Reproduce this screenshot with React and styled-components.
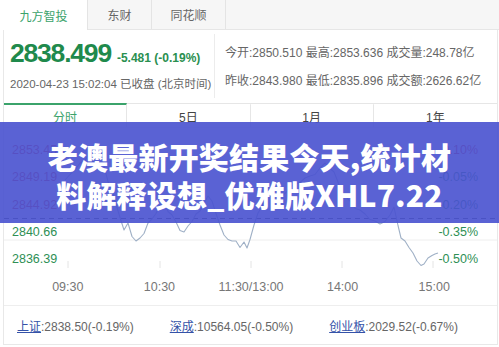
import styled, { createGlobalStyle } from 'styled-components';

const GlobalStyle = createGlobalStyle`
  html, body {
    margin: 0;
    padding: 0;
    background: #fff;
  }
  body {
    width: 499px;
    height: 347px;
    overflow: hidden;
    font-family: "Liberation Sans", "Noto Sans CJK SC", sans-serif;
    color: #555;
  }
`

const Page = styled.div`
  position: relative;
  width: 499px;
  height: 347px;
`

const TabBar = styled.div`
  display: flex;
  height: 30px;
  background: #f6f6f6;
  border-bottom: 1px solid #e6e6e6;
  box-sizing: border-box;
`

const Tab = styled.div`
  width: ${p => p.w}px;
  display: flex;
  align-items: center;
  justify-content: center;
  font-size: 12px;
  color: ${p => (p.active ? '#3ba36b' : '#666')};
  background: ${p => (p.active ? '#fff' : '#f6f6f6')};
  border-right: 1px solid #e4e4e4;
  margin-bottom: ${p => (p.active ? '-1px' : '0')};
`

const Panel = styled.div`
  margin: 0 1px 0 3px;
  border-left: 1px solid #e8e8e8;
  border-right: 1px solid #e8e8e8;
  border-bottom: 1px solid #e8e8e8;
`

const Quote = styled.div`
  display: flex;
  height: 73px;
`

const QuoteLeft = styled.div`
  width: 204px;
  padding: 4px 0 0 6px;
  border-right: 1px solid #ececec;
  margin: 4px 0 5px;
`

const PriceRow = styled.div`
  display: flex;
  align-items: baseline;
  gap: 6px;
  height: 32px;
`

const Price = styled.span`
  font-size: 26.5px;
  font-weight: 700;
  letter-spacing: -1.2px;
  color: #1f8a4c;
`

const Change = styled.span`
  font-size: 12px;
  font-weight: 700;
  color: #2a8f4f;
`

const DateLine = styled.div`
  margin-top: 5px;
  font-size: 11.5px;
  color: #666;
  white-space: nowrap;
`

const Stats = styled.div`
  display: flex;
  flex-direction: column;
  justify-content: center;
  gap: 11px;
  padding-left: 10px;
  padding-bottom: 3px;
  font-size: 12px;
  color: #666;
  white-space: nowrap;
`

const PeriodRow = styled.div`
  display: grid;
  grid-template-columns: repeat(4, 1fr);
  height: 23px;
  border-top: 1px solid #e6e6e6;
  border-bottom: 1px solid #eee;
`

const Period = styled.div`
  display: flex;
  align-items: center;
  justify-content: center;
  font-size: 12px;
  color: ${p => (p.active ? '#3ba36b' : '#444')};
  border-right: 1px solid #e6e6e6;
  border-top: 2px solid ${p => (p.active ? '#3ba36b' : 'transparent')};
  margin-top: -1px;
  &:last-child {
    border-right: none;
  }
`

const Chart = styled.div`
  position: relative;
  height: 140px;
  display: flex;
  justify-content: space-between;
  padding: 0 19px 0 8px;
`

const ChartSvg = styled.svg`
  position: absolute;
  left: 0;
  top: 0;
  width: 100%;
  height: 100%;
`

const AxisCol = styled.div`
  position: relative;
  display: flex;
  flex-direction: column;
  justify-content: space-between;
  align-items: ${p => (p.right ? 'flex-end' : 'flex-start')};
  padding: 15px 0 1px;
`

const AxisLabel = styled.span`
  font-size: 12.5px;
  line-height: 15px;
  color: ${p => (p.up ? '#d83a3a' : '#2e8f55')};
`

const XAxis = styled.div`
  display: grid;
  grid-template-columns: repeat(5, 1fr);
  height: 37px;
  padding: 0 17px 0 18px;
  border-bottom: 1px solid #eee;
  align-items: center;
`

const XLabel = styled.span`
  text-align: center;
  font-size: 12.5px;
  color: #777;
`

const Footer = styled.div`
  display: flex;
  align-items: center;
  gap: 36px;
  height: 38px;
  padding-left: 13px;
  font-size: 12px;
  color: #666;
  white-space: nowrap;
`

const IndexLink = styled.a`
  color: #3452a8;
  text-decoration: underline;
`

const Banner = styled.div`
  position: absolute;
  left: 0;
  right: 0;
  top: 122px;
  height: 101px;
  box-sizing: border-box;
  padding-top: 15px;
  background: rgba(74, 82, 208, 0.91);
  color: #fff;
  text-align: center;
  font-family: "Noto Sans CJK SC", "Liberation Sans", sans-serif;
  font-weight: 900;
  font-size: 30px;
  line-height: 38px;
  letter-spacing: 0.2px;
`

const pts = [
  [65, 178], [70, 171], [75, 169], [80, 161], [85, 157], [90, 151], [93, 160], [96, 152], [100, 148],
  [104, 164], [108, 178], [112, 190], [116, 202], [120, 214], [124, 229], [128, 221], [132, 233],
  [136, 240], [140, 236], [144, 230], [148, 222], [152, 217], [156, 210], [160, 204], [164, 199],
  [168, 208], [172, 214], [176, 220], [180, 227], [184, 231], [188, 224], [192, 218], [196, 213],
  [200, 209], [204, 200], [208, 195], [212, 199], [216, 210], [220, 224], [224, 233], [228, 236],
  [232, 240], [236, 239], [240, 244], [244, 241], [247, 246], [250, 236], [254, 224], [258, 211],
  [262, 203], [266, 196], [270, 191], [274, 186], [278, 190], [282, 194], [286, 189], [290, 186],
  [295, 182], [300, 179], [305, 177], [310, 174], [315, 171], [320, 167], [325, 161], [330, 165],
  [334, 171], [338, 180], [342, 190], [346, 196], [350, 199], [355, 205], [360, 209], [365, 212],
  [370, 216], [375, 220], [380, 222], [385, 218], [390, 214], [394, 205], [398, 222], [401, 237],
  [405, 239], [409, 244], [413, 252], [417, 259], [421, 262], [424, 263], [428, 256], [432, 252],
  [435, 253], [438, 251]
]

const line = pts.map(([x, y], i) => `${i ? 'L' : 'M'}${x} ${y + (i % 3 === 1 ? 1.5 : i % 3 === 2 ? -1 : 0)}`).join(' ')

const grid = [156, 183, 211, 238]
const ticks = [68, 160, 251, 342, 433]

const App = () => {
  return (
    <Page>
      <GlobalStyle />
      <TabBar>
        <Tab w={87} active>九方智投</Tab>
        <Tab w={63}>东财</Tab>
        <Tab w={73}>同花顺</Tab>
      </TabBar>
      <Panel>
        <Quote>
          <QuoteLeft>
            <PriceRow>
              <Price>2838.499</Price>
              <Change>-5.481 (-0.19%)</Change>
            </PriceRow>
            <DateLine>2020-04-23 15:02:04 已收盘 (北京时间)</DateLine>
          </QuoteLeft>
          <Stats>
            <span>今开:2850.510 最高:2853.636 成交量:248.78亿</span>
            <span>昨收:2843.980 最低:2835.896 成交额:2626.62亿</span>
          </Stats>
        </Quote>
        <PeriodRow>
          <Period active>分时</Period>
          <Period>5日</Period>
          <Period>1月</Period>
          <Period>1年</Period>
        </PeriodRow>
        <Chart>
          <ChartSvg viewBox="4 126 493 140" preserveAspectRatio="none">
            {grid.map(y => (
              <line key={y} x1="4" x2="497" y1={y} y2={y} stroke="#eeeeee" strokeWidth="1" />
            ))}
            {ticks.map(x => (
              <line key={x} x1={x} x2={x} y1="259" y2="266" stroke="#e4e4e4" strokeWidth="1" />
            ))}
            <line x1="4" x2="497" y1="216.5" y2="216.5" stroke="#555" strokeWidth="1" strokeDasharray="5 4" />
            <path d={line} fill="none" stroke="#9fb0c6" strokeWidth="1.1" strokeLinejoin="round" />
          </ChartSvg>
          <AxisCol>
            <AxisLabel up>2853.45</AxisLabel>
            <AxisLabel up>2849.19</AxisLabel>
            <AxisLabel up>2844.92</AxisLabel>
            <AxisLabel>2840.66</AxisLabel>
            <AxisLabel>2836.39</AxisLabel>
          </AxisCol>
          <AxisCol right>
            <AxisLabel up>0.10%</AxisLabel>
            <AxisLabel>-0.05%</AxisLabel>
            <AxisLabel>-0.20%</AxisLabel>
            <AxisLabel>-0.35%</AxisLabel>
            <AxisLabel>-0.50%</AxisLabel>
          </AxisCol>
        </Chart>
        <XAxis>
          <XLabel>09:30</XLabel>
          <XLabel>10:30</XLabel>
          <XLabel>11:30/13:00</XLabel>
          <XLabel>14:00</XLabel>
          <XLabel>15:00</XLabel>
        </XAxis>
        <Footer>
          <span><IndexLink>上证</IndexLink>:2838.50(-0.19%)</span>
          <span><IndexLink>深成</IndexLink>:10564.05(-0.50%)</span>
          <span><IndexLink>创业板</IndexLink>:2029.52(-0.67%)</span>
        </Footer>
      </Panel>
      <Banner>
        <div>老澳最新开奖结果今天,统计材</div>
        <div>料解释设想_优雅版XHL7.22</div>
      </Banner>
    </Page>
  )
}

export default App
